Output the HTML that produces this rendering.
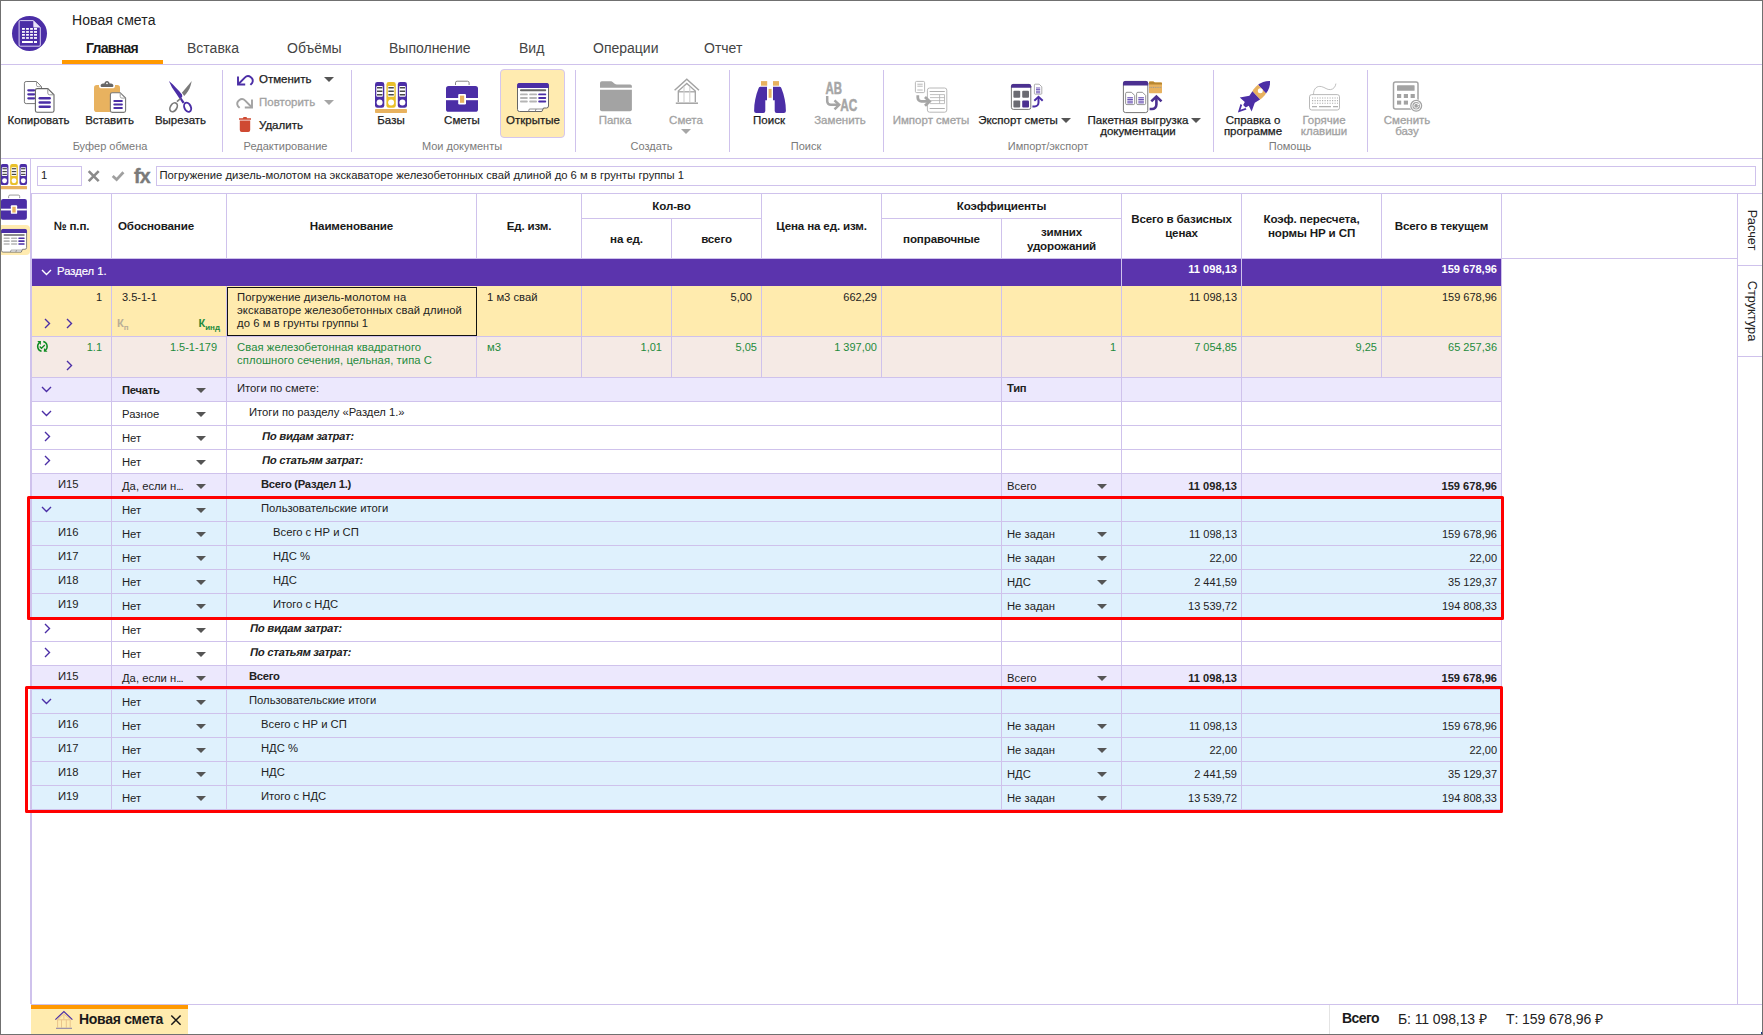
<!DOCTYPE html><html lang="ru"><head><meta charset="utf-8"><title>Новая смета</title><style>
*{box-sizing:border-box}
html,body{margin:0;padding:0}
body{width:1763px;height:1035px;position:relative;overflow:hidden;background:#fff;font-family:"Liberation Sans",sans-serif;font-size:11.25px;color:#222;line-height:13px}
.a{position:absolute}
.t{position:absolute;white-space:nowrap}
.hl{position:absolute;height:1px;background:#cfc2ec}
.vl{position:absolute;width:1px;background:#cfc2ec}
.tab{position:absolute;top:40px;font-size:14px;line-height:16px;color:#444;white-space:nowrap}
.rl{position:absolute;white-space:nowrap;font-size:11.5px;line-height:11px;color:#1c1c1c;text-align:center;-webkit-text-stroke:0.25px #1c1c1c}
.rl.d{color:#a2a2a2;-webkit-text-stroke:0.3px #a2a2a2}
.gl{position:absolute;white-space:nowrap;font-size:11px;line-height:12px;color:#7a7a7a;top:140px;text-align:center}
.ic{position:absolute}
.h{position:absolute;font-weight:bold;font-size:11.600px;letter-spacing:-0.150px;line-height:14px;margin-top:-0.500px;text-align:center;color:#1a1a1a;white-space:nowrap}
.row{position:absolute;left:32px}
.c{position:absolute;white-space:nowrap;line-height:13px}
.r{text-align:right;font-size:11px}
.b{font-weight:bold;letter-spacing:-0.25px}
.r.b{letter-spacing:0;font-size:11.1px}
.g{color:#1e8a3c}
.dd{position:absolute;width:0;height:0;border-left:5.5px solid transparent;border-right:5.5px solid transparent;border-top:5.5px solid #555}
</style></head><body>
<div class="a" style="left:12px;top:16px;width:35px;height:35px;border-radius:50%;background:#4b2ea6"></div>
<svg class="a" style="left:12px;top:16px" width="35" height="35" viewBox="0 0 35 35"><path d="M8.300 4.600h13l7 7v17.400a1.200 1.200 0 0 1-1.200 1.200h-18.800a1.200 1.200 0 0 1-1.200-1.200v-23.200a1.200 1.200 0 0 1 1.200-1.200z" fill="#4b2ea6" stroke="#d9d0f2" stroke-width="1"/><path d="M21.300 4.600l7 7h-5.800a1.200 1.200 0 0 1-1.200-1.200z" fill="#e9e4f8"/>
<g fill="#fff"><rect x="10" y="12" width="2.900" height="1.800"/><rect x="14.100" y="12" width="2.800" height="1.800"/><rect x="18.100" y="12" width="2.800" height="1.800"/><rect x="22" y="12" width="3" height="1.800"/>
<rect x="10" y="15.100" width="2.900" height="1.700"/><rect x="14.100" y="15.100" width="2.800" height="1.700"/><rect x="18.100" y="15.100" width="2.800" height="1.700"/><rect x="22" y="15.100" width="3" height="1.700"/>
<rect x="10" y="18" width="2.900" height="1.700"/><rect x="14.100" y="18" width="2.800" height="1.700"/><rect x="18.100" y="18" width="2.800" height="1.700"/><rect x="22" y="18" width="3" height="1.700"/>
<rect x="10" y="21.100" width="2.900" height="1.700"/><rect x="14.100" y="21.100" width="2.800" height="1.700"/><rect x="18.100" y="21.100" width="2.800" height="1.700"/><rect x="22" y="21.100" width="3" height="1.700"/>
<rect x="10" y="25" width="10.900" height="2"/><rect x="22" y="25" width="3" height="2"/></g></svg>
<div class="t" style="left:72px;top:11px;font-size:14px;line-height:18px;color:#222;letter-spacing:0.1px">Новая смета</div>
<div class="tab" style="left:86px;font-weight:bold;color:#1a1a1a;letter-spacing:-0.7px">Главная</div>
<div class="tab" style="left:187px">Вставка</div>
<div class="tab" style="left:287px">Объёмы</div>
<div class="tab" style="left:389px">Выполнение</div>
<div class="tab" style="left:519px">Вид</div>
<div class="tab" style="left:593px">Операции</div>
<div class="tab" style="left:704px">Отчет</div>
<div class="a" style="left:62px;top:60px;width:101px;height:4px;background:#ff9900"></div>
<div class="hl" style="left:1px;top:64px;width:1761px"></div>
<div class="vl" style="left:222px;top:70px;height:82px"></div>
<div class="vl" style="left:351px;top:70px;height:82px"></div>
<div class="vl" style="left:575px;top:70px;height:82px"></div>
<div class="vl" style="left:729px;top:70px;height:82px"></div>
<div class="vl" style="left:883px;top:70px;height:82px"></div>
<div class="vl" style="left:1213px;top:70px;height:82px"></div>
<div class="vl" style="left:1367px;top:70px;height:82px"></div>
<div class="hl" style="left:1px;top:158px;width:1761px"></div>
<div class="a" style="left:500px;top:69px;width:65px;height:69px;background:#ffebb0;border:1px solid #d4c6ee;border-radius:4px"></div>
<div class="rl " style="left:-21.5px;width:120px;top:115px">Копировать</div>
<div class="rl " style="left:49.5px;width:120px;top:115px">Вставить</div>
<div class="rl " style="left:120.5px;width:120px;top:115px">Вырезать</div>
<div class="gl" style="left:30.0px;width:160px">Буфер обмена</div>
<div class="rl" style="left:259px;top:74px">Отменить</div>
<div class="rl d" style="left:259px;top:97px">Повторить</div>
<div class="rl" style="left:259px;top:120px">Удалить</div>
<div class="dd" style="left:323.5px;top:76.5px"></div>
<div class="dd" style="left:323.5px;top:99.5px;border-top-color:#a6a6a6"></div>
<div class="gl" style="left:205.5px;width:160px">Редактирование</div>
<div class="rl " style="left:331.0px;width:120px;top:115px">Базы</div>
<div class="rl " style="left:402.0px;width:120px;top:115px">Сметы</div>
<div class="rl " style="left:473.0px;width:120px;top:115px">Открытые</div>
<div class="gl" style="left:382.0px;width:160px">Мои документы</div>
<div class="rl d" style="left:555.0px;width:120px;top:115px">Папка</div>
<div class="rl d" style="left:626.0px;width:120px;top:115px">Смета</div>
<div class="dd" style="left:680.5px;top:129px;border-top-color:#a6a6a6"></div>
<div class="gl" style="left:571.5px;width:160px">Создать</div>
<div class="rl " style="left:709.0px;width:120px;top:115px">Поиск</div>
<div class="rl d" style="left:780.0px;width:120px;top:115px">Заменить</div>
<div class="gl" style="left:726.0px;width:160px">Поиск</div>
<div class="rl d" style="left:871.0px;width:120px;top:115px">Импорт сметы</div>
<div class="rl " style="left:958.0px;width:120px;top:115px">Экспорт сметы</div>
<div class="dd" style="left:1060.5px;top:118px"></div>
<div class="rl " style="left:1068.0px;width:140px;top:115px">Пакетная выгрузка<br>документации</div>
<div class="dd" style="left:1190.5px;top:118px"></div>
<div class="gl" style="left:968.0px;width:160px">Импорт/экспорт</div>
<div class="rl " style="left:1193.0px;width:120px;top:115px">Справка о<br>программе</div>
<div class="rl d" style="left:1264.0px;width:120px;top:115px">Горячие<br>клавиши</div>
<div class="gl" style="left:1210.0px;width:160px">Помощь</div>
<div class="rl d" style="left:1347.0px;width:120px;top:115px">Сменить<br>базу</div>
<svg class="a" style="left:0;top:0" width="1763" height="160" viewBox="0 0 1763 160">
<!-- copy -->
<g>
<path d="M26.2 81.5h10.3l5 5.2v15.1a1.8 1.8 0 0 1-1.8 1.8h-13.5a1.8 1.8 0 0 1-1.8-1.8v-18.5a1.8 1.8 0 0 1 1.8-1.8z" fill="#fff" stroke="#777" stroke-width="1"/>
<path d="M36.5 81.5v3.6a1.6 1.6 0 0 0 1.6 1.6h3.4" fill="none" stroke="#9a9a9a" stroke-width="0.9"/>
<g fill="#4b2ea6"><rect x="27.2" y="89.2" width="8" height="2.2" rx="1.1"/><rect x="27.2" y="93.2" width="8" height="2.2" rx="1.1"/><rect x="27.2" y="97.2" width="8" height="2.2" rx="1.1"/></g>
<path d="M37.2 88.6h10.6l6.2 6.2v15.7a1.8 1.8 0 0 1-1.8 1.8h-15a1.8 1.8 0 0 1-1.8-1.8v-20.1a1.8 1.8 0 0 1 1.8-1.8z" fill="#fff" stroke="#666" stroke-width="1.1"/>
<path d="M47.8 88.6v4.4a1.8 1.8 0 0 0 1.8 1.8h4.4" fill="none" stroke="#8a8a8a" stroke-width="0.9"/>
<g fill="#4b2ea6" transform="translate(38.5 97)"><rect x="0" y="0" width="12.4" height="2.4" rx="1.2"/><rect x="0" y="4.3" width="12.4" height="2.4" rx="1.2"/><rect x="0" y="8.6" width="12.4" height="2.4" rx="1.2"/></g>
</g>
<!-- paste -->
<g>
<rect x="94" y="85" width="26" height="27" rx="2.8" fill="#e8b25f"/>
<path d="M99 84.5h16v1.2a2.6 2.6 0 0 1-2.6 2.6h-10.8a2.6 2.6 0 0 1-2.6-2.6z" fill="#fff"/>
<path d="M101.8 87a1.2 1.2 0 0 1-1.2-1.2c0-1.3 1-2 2.4-2.2h1.4c0.2-1.6 1.2-2.7 2.6-2.7s2.4 1.1 2.6 2.7h1.4c1.4 0.200 2.400 0.900 2.400 2.200a1.200 1.200 0 0 1-1.200 1.200z" fill="#666"/>
<circle cx="107" cy="83.300" r="0.900" fill="#fff"/>
<path d="M112.200 92.700h8l5.400 5.400v12.500a1.800 1.800 0 0 1-1.800 1.800h-11.600a1.800 1.800 0 0 1-1.800-1.800v-16.100a1.800 1.800 0 0 1 1.800-1.800z" fill="#fff" stroke="#777" stroke-width="1.100"/>
<path d="M120.200 92.700v3.700a1.700 1.700 0 0 0 1.700 1.700h3.700" fill="none" stroke="#9a9a9a" stroke-width="0.900"/>
<g fill="#4b2ea6"><rect x="113.300" y="100" width="9.600" height="2.100" rx="1"/><rect x="113.300" y="103.500" width="9.600" height="2.100" rx="1"/><rect x="113.300" y="107" width="9.600" height="2.100" rx="1"/></g>
</g>
<!-- scissors -->
<g>
<path d="M191.800 81l-1.200 4.500c-1.200 4-3.200 7.300-6.400 10.400l-2.300-3.200z" fill="#7a7a7a"/>
<path d="M168.900 81L172.700 84.200L175.700 87.600L179.100 91L182 94.600L182.300 96.500L181.400 97.800L184.600 102.200L182.600 103.600L176.800 94.400L172 87.600Z" fill="#4b2ea6"/>
<ellipse cx="187.600" cy="107.300" rx="3.200" ry="4.800" transform="rotate(-24 187.600 107.300)" fill="#fff" stroke="#4b2ea6" stroke-width="1.900"/>
<path d="M180.500 98.500l-3.500 3.200" stroke="#7a7a7a" stroke-width="1.600" fill="none"/>
<ellipse cx="173.600" cy="107.300" rx="3.200" ry="4.800" transform="rotate(32 173.600 107.300)" fill="#fff" stroke="#7a7a7a" stroke-width="1.700"/>
</g>
<!-- undo -->
<g fill="none" stroke="#4b2ea6" stroke-width="1.900">
<path d="M238 76.500v8h7.200"/>
<path d="M238.500 84l6.300-6.400a4.600 4.600 0 0 1 7.200 5.600l-1.600 1.600"/>
</g>
<!-- redo -->
<g fill="none" stroke="#a3a3a3" stroke-width="1.900">
<path d="M252 99.500v8h-7.200"/>
<path d="M251.500 107l-6.300-6.400a4.600 4.600 0 0 0-7.200 5.600l1.600 1.600"/>
</g>
<!-- trash -->
<g fill="#cf4a32">
<path d="M239 118.200h3.800l0.800-1.100h2.800l0.800 1.100h3.800v1.500h-12z"/>
<path d="M239.800 120.600h10.400v9.400a1.900 1.900 0 0 1-1.900 1.900h-6.600a1.900 1.900 0 0 1-1.900-1.900z"/>
</g>
<!-- bases -->
<g>
<rect x="375" y="82" width="9.300" height="25.800" rx="2.400" fill="#4b2ea6"/>
<rect x="386.400" y="82" width="9.400" height="25.800" rx="2.400" fill="#e9c02a"/>
<rect x="397.800" y="82" width="9.200" height="25.800" rx="2.400" fill="#4b2ea6"/>
<g fill="#fff"><rect x="376.300" y="86" width="6.600" height="10.800" rx="1"/><rect x="387.800" y="86" width="6.600" height="10.800" rx="1"/><rect x="399.100" y="86" width="6.600" height="10.800" rx="1"/>
<circle cx="379.600" cy="102.500" r="3"/><circle cx="391.100" cy="102.500" r="3"/><circle cx="402.400" cy="102.500" r="3"/></g>
<g fill="#4a4a4a"><rect x="377" y="87" width="5.400" height="1.500"/><rect x="377" y="90.500" width="5.400" height="1.500"/><rect x="377" y="94" width="5.400" height="1.500"/>
<rect x="388.400" y="87" width="5.400" height="1.500"/><rect x="388.400" y="90.500" width="5.400" height="1.500"/><rect x="388.400" y="94" width="5.400" height="1.500"/>
<rect x="399.700" y="87" width="5.400" height="1.500"/><rect x="399.700" y="90.500" width="5.400" height="1.500"/><rect x="399.700" y="94" width="5.400" height="1.500"/></g>
<rect x="375" y="109" width="32" height="4" rx="0.800" fill="#e8b25f"/>
</g>
<!-- briefcase -->
<g>
<path d="M455.500 85v-2.200a1.600 1.600 0 0 1 1.600-1.600h10.400a1.600 1.600 0 0 1 1.600 1.600v2.200" fill="none" stroke="#777" stroke-width="0.900"/>
<rect x="446" y="86" width="32" height="25.800" rx="2.600" fill="#4b2ea6"/>
<rect x="446" y="98" width="32" height="2.200" fill="#fff"/>
<rect x="458.200" y="93.900" width="7.800" height="10.500" rx="1.200" fill="#fff"/>
<rect x="460" y="95.600" width="4.200" height="7.200" fill="#e8b25f"/>
</g>
<!-- open -->
<g>
<path d="M517.500 85.500a2 2 0 0 1 2-2h27a2 2 0 0 1 2 2v20.500a2 2 0 0 1-2 2h-3l-1.600 3.500h-22.400a2 2 0 0 1-2-2z" fill="#fff" stroke="#666" stroke-width="1"/>
<path d="M517.100 88v-2.700a2.200 2.200 0 0 1 2.200-2.200h27.400a2.200 2.200 0 0 1 2.200 2.200v2.700z" fill="#4b2ea6"/>
<path d="M528.500 111.400l0.800-2.400h13.600M535.200 111.400l0.900-2.400" fill="none" stroke="#777" stroke-width="0.800"/>
<rect x="520" y="89.300" width="26.200" height="1.900" rx="0.900" fill="#666"/>
<g fill="#b5b5b5"><rect x="520" y="93.400" width="7.800" height="1.900" rx="0.900"/><rect x="529.200" y="93.400" width="7.800" height="1.900" rx="0.900"/>
<rect x="520" y="97" width="7.800" height="1.900" rx="0.900"/><rect x="529.200" y="97" width="7.800" height="1.900" rx="0.900"/>
<rect x="520" y="100.500" width="7.800" height="1.900" rx="0.900"/><rect x="529.200" y="100.500" width="7.800" height="1.900" rx="0.900"/></g>
<g fill="#4b2ea6"><rect x="538.200" y="93.400" width="8" height="1.900" rx="0.900"/><rect x="538.200" y="97" width="8" height="1.900" rx="0.900"/><rect x="538.200" y="100.500" width="8" height="1.900" rx="0.900"/></g>
</g>
<!-- folder -->
<g fill="#a3a3a3">
<path d="M600 87.800v-4.800a1.800 1.800 0 0 1 1.800-1.800h8.400c1.400 0 2.200 0.500 3 1.400c1 1.200 2 1.800 3.600 1.800h13.300a1.800 1.800 0 0 1 1.800 1.800v1.600z"/>
<path d="M600 89.700h31.900v19.600a1.900 1.900 0 0 1-1.900 1.900h-28.100a1.900 1.900 0 0 1-1.900-1.900z"/>
</g>
<!-- house -->
<g fill="none" stroke="#a3a3a3">
<path d="M674.600 90.200l12.200-11l12.200 11" stroke-width="1.500"/>
<path d="M678.300 102v-11l8.500-7.600l8.500 7.600v11" stroke-width="1.300"/>
<path d="M678.300 91.800h17" stroke-width="1.300"/>
<path d="M684 86.500v15.500M689.800 86.500v15.500" stroke="#d0d0d0" stroke-width="1.100"/>
<path d="M675.800 103.200h22.200" stroke-width="1.500"/>
</g>
<!-- binoculars -->
<g>
<rect x="761" y="81.100" width="6.200" height="4.600" fill="#e8b25f"/>
<rect x="773" y="81.100" width="6" height="4.600" fill="#e8b25f"/>
<rect x="768.600" y="88.900" width="3" height="8.900" fill="#e8b25f"/>
<path d="M760.200 86.800h6.800v13.400h-1.700v10.700a2 2 0 0 1-2 2h-7.200a2 2 0 0 1-2-2c0-8 1.600-15.500 4.400-22.500a2.200 2.200 0 0 1 1.700-1.600z" fill="#4b2ea6"/>
<path d="M779.800 86.800h-6.800v13.400h1.700v10.700a2 2 0 0 0 2 2h7.200a2 2 0 0 0 2-2c0-8-1.600-15.500-4.400-22.500a2.200 2.200 0 0 0-1.700-1.600z" fill="#4b2ea6"/>
</g>
<!-- AB AC -->
<g fill="#a6a6a6" stroke="#a6a6a6" stroke-width="0.5" font-family="Liberation Sans, sans-serif" font-weight="bold" font-size="16">
<text x="825.500" y="93.700" textLength="16.500" lengthAdjust="spacingAndGlyphs">AB</text>
<text x="840.300" y="110.700" textLength="17" lengthAdjust="spacingAndGlyphs">AC</text>
<path d="M827.200 96v5.200a3.600 3.600 0 0 0 3.600 3.600h8" fill="none" stroke="#a6a6a6" stroke-width="2.500"/>
<path d="M834.500 100.300l4.700 4.500l-4.700 4.500" fill="none" stroke="#a6a6a6" stroke-width="2.500"/>
</g>
<!-- import -->
<g fill="none" stroke="#b0b0b0">
<rect x="915.400" y="81.400" width="9.200" height="11.200" rx="1.200" fill="#fff" stroke-width="0.900"/>
<path d="M917.300 84.200h5.400M917.300 86.200h5.400M917.300 90h5.400" stroke-width="0.900"/>
<rect x="927.400" y="88" width="19.400" height="24.200" rx="2.200" fill="#fff" stroke-width="0.900"/>
<path d="M929.600 91.500h15.200M929.600 108.500h15.200" stroke-width="1.200"/>
<path d="M930 94.600h14.500v9h-14.500M930 97.600h14.500M930 100.600h14.500M939.600 94.600v9" stroke-width="0.800"/>
<path d="M917.800 95.300v2.500a3.600 3.600 0 0 0 3.600 3.600h8" stroke="#a6a6a6" stroke-width="2.800"/>
<path d="M925 97l4.600 4.400l-4.600 4.400" stroke="#a6a6a6" stroke-width="2.800"/>
</g>
<!-- export -->
<g>
<rect x="1011.400" y="84.400" width="19.400" height="25" rx="2" fill="#fff" stroke="#666" stroke-width="0.900"/>
<path d="M1011 87.800v-1.600a2.200 2.200 0 0 1 2.200-2.200h15.800a2.200 2.200 0 0 1 2.200 2.200v1.600z" fill="#4b3090"/>
<rect x="1013.400" y="90.800" width="6.800" height="7" rx="1" fill="#6b6b72"/><rect x="1022.200" y="90.800" width="6.800" height="7" rx="1" fill="#6b6b72"/>
<rect x="1013.400" y="100.600" width="6.800" height="7" rx="1" fill="#6b6b72"/><rect x="1022.200" y="100.600" width="6.800" height="7" rx="1" fill="#4b3090"/>
<path d="M1034.400 85a0.800 0.800 0 0 1 0.800-0.800h4l2.600 2.600v6.600a0.800 0.800 0 0 1-0.800 0.800h-5.800a0.800 0.800 0 0 1-0.800-0.800z" fill="#fff" stroke="#999" stroke-width="0.800"/>
<path d="M1036 88h4.200M1036 89.600h4.200M1036 91.200h4.200M1036 92.800h4.200" stroke="#4b2ea6" stroke-width="0.800"/>
<path d="M1032.400 106.400h2.200a3.900 3.900 0 0 0 3.900-3.900v-5" fill="none" stroke="#4b2ea6" stroke-width="2"/>
<path d="M1034.300 100.800l4.200-4l4.200 4" fill="none" stroke="#4b2ea6" stroke-width="2"/>
</g>
<!-- batch -->
<g>
<rect x="1123.400" y="81.400" width="24.400" height="31.200" rx="2.200" fill="#fff" stroke="#666" stroke-width="0.900"/>
<path d="M1123 85.600v-2.400a2.200 2.200 0 0 1 2.200-2.200h20.800a2.200 2.200 0 0 1 2.200 2.200v2.400z" fill="#4b3090"/>
<path d="M1125.600 93.600a1.300 1.300 0 0 1 1.300-1.300h4.600l3.200 3.200v7.800a1.300 1.300 0 0 1-1.300 1.300h-6.500a1.300 1.300 0 0 1-1.300-1.300z" fill="#fff" stroke="#777" stroke-width="0.800"/>
<path d="M1136.600 93.600a1.300 1.300 0 0 1 1.300-1.300h4.600l3.200 3.200v7.800a1.300 1.300 0 0 1-1.300 1.300h-6.500a1.300 1.300 0 0 1-1.300-1.300z" fill="#fff" stroke="#777" stroke-width="0.800"/>
<g fill="#6a52b5"><rect x="1127.300" y="97.200" width="5.600" height="1.100"/><rect x="1127.300" y="98.900" width="5.600" height="1.100"/><rect x="1127.300" y="100.600" width="5.600" height="1.100"/><rect x="1127.300" y="102.300" width="5.600" height="1.100"/>
<rect x="1138.300" y="97.200" width="5.600" height="1.100"/><rect x="1138.300" y="98.900" width="5.600" height="1.100"/><rect x="1138.300" y="100.600" width="5.600" height="1.100"/><rect x="1138.300" y="102.300" width="5.600" height="1.100"/></g>
<path d="M1149 82.200a0.800 0.800 0 0 1 0.800-0.800h3.600l1.400 1.200h6.400a0.800 0.800 0 0 1 0.800 0.800v9a0.800 0.800 0 0 1-0.800 0.800h-11.400a0.800 0.800 0 0 1-0.800-0.800z" fill="#e8b25f"/>
<path d="M1149 82.200a0.800 0.800 0 0 1 0.800-0.800h3.600l1.400 1.200h6.400a0.800 0.800 0 0 1 0.800 0.800v1h-13z" fill="#b8862f"/>
<path d="M1149.400 87.400h12.400" stroke="#999" stroke-width="1" stroke-dasharray="1 0.800"/>
<path d="M1149.600 109h2.400a4.400 4.400 0 0 0 4.400-4.400v-7.500" fill="none" stroke="#4b3090" stroke-width="2.600"/>
<path d="M1151.300 101.400l5.100-4.900l5.100 4.900" fill="none" stroke="#4b3090" stroke-width="2.600"/>
</g>
<!-- rocket -->
<g>
<path d="M1270 81c-4.500-0.200-8.600 1.200-12 3.800l8 8.600c2.900-3.400 4.300-7.600 4-12.400z" fill="#4b2ea6"/>
<path d="M1258 84.800c-2.400 1.800-4 3.800-5.600 6.400l7.700 8.300c2.400-1.700 4.300-3.600 5.900-6.100z" fill="#e8b25f"/>
<circle cx="1260.300" cy="90.700" r="2.500" fill="#fff"/>
<path d="M1252.400 91.200l-3 4.600l-9.600 1.800l5 4.400l-1.600 3l2.400 2.400l3.200-1.600l2.800 5.800l3.200-8.800l5.300-3.300z" fill="#4b2ea6"/>
<path d="M1240.500 104l-2.600 8.600l8.600-3.200l-1-1.400l-5 1.800l1.600-4.800z" fill="#4b2ea6"/>
</g>
<!-- keyboard -->
<g fill="none" stroke="#b0b0b0">
<rect x="1309.500" y="94.600" width="30" height="15.400" rx="2.200" stroke-width="0.900"/>
<path d="M1313.500 94.400c0-6 3.500-8.800 8-7.800c3.600 0.800 5.600 3.400 9 3c3-0.400 5-2.800 5.400-6" stroke-width="0.800"/>
<path d="M1312 98h26M1312 100.600h26M1312 103.200h26" stroke-width="1.100" stroke-dasharray="1.200 1.300"/>
<path d="M1312 106.600h5M1319 106.600h12M1333 106.600h5" stroke-width="1.100"/>
</g>
<!-- calculator -->
<g>
<rect x="1393.500" y="82" width="24.500" height="27" rx="2" fill="#fff" stroke="#a3a3a3" stroke-width="1.500"/>
<rect x="1397" y="85.200" width="17.600" height="5.600" rx="0.600" fill="#a3a3a3"/>
<g fill="#a3a3a3"><rect x="1397" y="94" width="4.200" height="4"/><rect x="1403.800" y="94" width="4.200" height="4"/><rect x="1410.600" y="94" width="4.200" height="4"/>
<rect x="1397" y="100.600" width="4.200" height="4"/><rect x="1403.800" y="100.600" width="4.200" height="4"/></g>
<circle cx="1416.200" cy="105.800" r="6.600" fill="#fff"/>
<circle cx="1416.200" cy="105.800" r="5.400" fill="#fff" stroke="#a3a3a3" stroke-width="1.300"/>
<circle cx="1416.200" cy="105.800" r="3.800" fill="#a3a3a3"/>
<path d="M1418 104.300a2.300 2.300 0 1 0 0.500 1.900" fill="none" stroke="#fff" stroke-width="1"/>
<path d="M1419.300 102.800v2.400h-2.400z" fill="#fff"/>
</g>
</svg>

<div class="a" style="left:37px;top:166px;width:45px;height:20px;border:1px solid #cfc2ec"></div>
<div class="t" style="left:41px;top:169px">1</div>
<div class="a" style="left:156px;top:166px;width:1600px;height:20px;border:1px solid #cfc2ec"></div>
<div class="t" style="left:159.500px;top:169px">Погружение дизель-молотом на экскаваторе железобетонных свай длиной до 6 м в грунты группы 1</div>
<svg class="a" style="left:86px;top:168px" width="70" height="18" viewBox="0 0 70 18"><path d="M2.700 3.200l10 10M12.700 3.200l-10 10" stroke="#8a8a8a" stroke-width="2.600" fill="none"/><path d="M26.700 8l3.900 3.600l6.800-7.300" stroke="#a0a0a0" stroke-width="2.800" fill="none"/></svg>
<div class="t" style="left:134px;top:164.500px;font-size:19.600px;line-height:22px;font-weight:bold;color:#7a7a7a;-webkit-text-stroke:0.4px #7a7a7a;letter-spacing:-0.700px">fx</div>
<div class="hl" style="left:31px;top:193px;width:1731px"></div>
<div class="vl" style="left:30px;top:158px;height:846px"></div>
<div class="vl" style="left:31px;top:194px;height:810px"></div>
<div class="a" style="left:1px;top:225px;width:28.5px;height:30px;background:#ffebb0;border-radius:0 4px 4px 0"></div>
<svg class="a" style="left:1px;top:160px" width="29" height="100" viewBox="1 160 29 100">
<g transform="translate(-306.7 97.2) scale(0.82 0.815)">
<rect x="375" y="82" width="9.300" height="25.800" rx="2.400" fill="#4b2ea6"/>
<rect x="386.400" y="82" width="9.400" height="25.800" rx="2.400" fill="#e9c02a"/>
<rect x="397.800" y="82" width="9.200" height="25.800" rx="2.400" fill="#4b2ea6"/>
<g fill="#fff"><rect x="376.300" y="86" width="6.600" height="10.800" rx="1"/><rect x="387.800" y="86" width="6.600" height="10.800" rx="1"/><rect x="399.100" y="86" width="6.600" height="10.800" rx="1"/>
<circle cx="379.600" cy="102.500" r="3"/><circle cx="391.100" cy="102.500" r="3"/><circle cx="402.400" cy="102.500" r="3"/></g>
<g fill="#4a4a4a"><rect x="377" y="87" width="5.400" height="1.500"/><rect x="377" y="90.500" width="5.400" height="1.500"/><rect x="377" y="94" width="5.400" height="1.500"/>
<rect x="388.400" y="87" width="5.400" height="1.500"/><rect x="388.400" y="90.500" width="5.400" height="1.500"/><rect x="388.400" y="94" width="5.400" height="1.500"/>
<rect x="399.700" y="87" width="5.400" height="1.500"/><rect x="399.700" y="90.500" width="5.400" height="1.500"/><rect x="399.700" y="94" width="5.400" height="1.500"/></g>
<rect x="375" y="109" width="32" height="4" rx="0.800" fill="#e8b25f"/>
</g>
<g transform="translate(-360.3 129.3) scale(0.81)">
<path d="M455.500 85v-2.200a1.600 1.600 0 0 1 1.600-1.600h10.400a1.600 1.600 0 0 1 1.600 1.600v2.200" fill="none" stroke="#777" stroke-width="0.900"/>
<rect x="446" y="86" width="32" height="25.800" rx="2.600" fill="#4b2ea6"/>
<rect x="446" y="98" width="32" height="2.200" fill="#fff"/>
<rect x="458.200" y="93.900" width="7.800" height="10.500" rx="1.200" fill="#fff"/>
<rect x="460" y="95.600" width="4.200" height="7.200" fill="#e8b25f"/>
</g>
<g transform="translate(-417.7 161.8) scale(0.81)">
<path d="M517.500 85.500a2 2 0 0 1 2-2h27a2 2 0 0 1 2 2v20.500a2 2 0 0 1-2 2h-3l-1.600 3.500h-22.400a2 2 0 0 1-2-2z" fill="#fff" stroke="#666" stroke-width="1"/>
<path d="M517.100 88v-2.700a2.200 2.200 0 0 1 2.200-2.200h27.400a2.200 2.200 0 0 1 2.200 2.200v2.700z" fill="#4b2ea6"/>
<path d="M528.500 111.400l0.800-2.400h13.600M535.200 111.400l0.900-2.400" fill="none" stroke="#777" stroke-width="0.800"/>
<rect x="520" y="89.300" width="26.200" height="1.900" rx="0.900" fill="#666"/>
<g fill="#b5b5b5"><rect x="520" y="93.400" width="7.800" height="1.900" rx="0.900"/><rect x="529.200" y="93.400" width="7.800" height="1.900" rx="0.900"/>
<rect x="520" y="97" width="7.800" height="1.900" rx="0.900"/><rect x="529.200" y="97" width="7.800" height="1.900" rx="0.900"/>
<rect x="520" y="100.500" width="7.800" height="1.900" rx="0.900"/><rect x="529.200" y="100.500" width="7.800" height="1.900" rx="0.900"/></g>
<g fill="#4b2ea6"><rect x="538.200" y="93.400" width="8" height="1.900" rx="0.900"/><rect x="538.200" y="97" width="8" height="1.900" rx="0.900"/><rect x="538.200" y="100.500" width="8" height="1.900" rx="0.900"/></g>
</g>
</svg>

<div class="hl" style="left:31px;top:258px;width:1707px"></div>
<div class="vl" style="left:31px;top:194px;height:64px"></div>
<div class="vl" style="left:111px;top:194px;height:64px"></div>
<div class="vl" style="left:226px;top:194px;height:64px"></div>
<div class="vl" style="left:476px;top:194px;height:64px"></div>
<div class="vl" style="left:581px;top:194px;height:64px"></div>
<div class="vl" style="left:671px;top:218px;height:40px"></div>
<div class="vl" style="left:761px;top:194px;height:64px"></div>
<div class="vl" style="left:881px;top:194px;height:64px"></div>
<div class="vl" style="left:1001px;top:218px;height:40px"></div>
<div class="vl" style="left:1121px;top:194px;height:64px"></div>
<div class="vl" style="left:1241px;top:194px;height:64px"></div>
<div class="vl" style="left:1381px;top:194px;height:64px"></div>
<div class="vl" style="left:1501px;top:194px;height:64px"></div>
<div class="hl" style="left:581px;top:218px;width:180px"></div>
<div class="hl" style="left:881px;top:218px;width:240px"></div>
<div class="h" style="left:32px;width:79px;top:219px">№ п.п.</div>
<div class="h" style="left:118px;top:219px;text-align:left">Обоснование</div>
<div class="h" style="left:227px;width:249px;top:219px">Наименование</div>
<div class="h" style="left:477px;width:104px;top:219px">Ед. изм.</div>
<div class="h" style="left:582px;width:179px;top:199px">Кол-во</div>
<div class="h" style="left:582px;width:89px;top:232px">на ед.</div>
<div class="h" style="left:672px;width:89px;top:232px">всего</div>
<div class="h" style="left:762px;width:119px;top:219px">Цена на ед. изм.</div>
<div class="h" style="left:882px;width:239px;top:199px">Коэффициенты</div>
<div class="h" style="left:882px;width:119px;top:232px">поправочные</div>
<div class="h" style="left:1002px;width:119px;top:225px">зимних<br>удорожаний</div>
<div class="h" style="left:1122px;width:119px;top:212px">Всего в базисных<br>ценах</div>
<div class="h" style="left:1242px;width:139px;top:212px">Коэф. пересчета,<br>нормы НР и СП</div>
<div class="h" style="left:1382px;width:119px;top:219px">Всего в текущем</div>
<div class="a" style="left:32px;top:259px;width:1469px;height:27px;background:#5b34ad"></div>
<div class="vl" style="left:1121px;top:259px;height:27px;background:#cfc2ec"></div>
<div class="vl" style="left:1241px;top:259px;height:27px;background:#cfc2ec"></div>
<svg class="a" style="left:41px;top:269px" width="11" height="7" viewBox="0 0 11 7"><path d="M1 1l4.5 4.5l4.5-4.5" fill="none" stroke="#fff" stroke-width="1.4"/></svg>
<div class="c " style="left:57px;top:265px;color:#fff;-webkit-text-stroke:0.2px #fff">Раздел 1.</div>
<div class="c r b" style="left:1037px;width:200px;top:263px;color:#fff">11 098,13</div>
<div class="c r b" style="left:1297px;width:200px;top:263px;color:#fff">159 678,96</div>
<div class="a" style="left:32px;top:286px;width:1469px;height:50px;background:#ffebae"></div>
<div class="hl" style="left:32px;top:336px;width:1469px"></div>
<div class="a" style="left:32px;top:337px;width:1469px;height:40px;background:#f5eae5"></div>
<div class="hl" style="left:32px;top:377px;width:1469px"></div>
<div class="vl" style="left:111px;top:286px;height:91px"></div>
<div class="vl" style="left:226px;top:286px;height:91px"></div>
<div class="vl" style="left:476px;top:286px;height:91px"></div>
<div class="vl" style="left:581px;top:286px;height:91px"></div>
<div class="vl" style="left:671px;top:286px;height:91px"></div>
<div class="vl" style="left:761px;top:286px;height:91px"></div>
<div class="vl" style="left:881px;top:286px;height:91px"></div>
<div class="vl" style="left:1001px;top:286px;height:91px"></div>
<div class="vl" style="left:1121px;top:286px;height:91px"></div>
<div class="vl" style="left:1241px;top:286px;height:91px"></div>
<div class="vl" style="left:1381px;top:286px;height:91px"></div>
<div class="vl" style="left:1501px;top:286px;height:91px"></div>
<div class="a" style="left:227px;top:287px;width:250px;height:49px;border:1.500px solid #111;background:#ffebae"></div>
<div class="c r " style="left:-98px;width:200px;top:291px;">1</div>
<div class="c " style="left:122px;top:291px;font-size:11px">3.5-1-1</div>
<svg class="a" style="left:44px;top:318px" width="7" height="11" viewBox="0 0 7 11"><path d="M1 1l4.5 4.5l-4.5 4.5" fill="none" stroke="#4b2ea6" stroke-width="1.4"/></svg>
<svg class="a" style="left:66px;top:318px" width="7" height="11" viewBox="0 0 7 11"><path d="M1 1l4.5 4.5l-4.5 4.5" fill="none" stroke="#4b2ea6" stroke-width="1.4"/></svg>
<div class="c b" style="left:117px;top:317px;color:#b9ad96">К<span style="font-size:8px;position:relative;top:3px">п</span></div>
<div class="c b r" style="left:120px;width:100px;top:317px;color:#1e8a3c">К<span style="font-size:8px;position:relative;top:3px">инд</span></div>
<div class="c" style="left:237px;top:291px;white-space:normal;width:236px;letter-spacing:0.08px">Погружение дизель-молотом на<br>экскаваторе железобетонных свай длиной<br>до 6 м в грунты группы 1</div>
<div class="c " style="left:487px;top:291px;">1 м3 свай</div>
<div class="c r " style="left:552px;width:200px;top:291px;">5,00</div>
<div class="c r " style="left:677px;width:200px;top:291px;">662,29</div>
<div class="c r " style="left:1037px;width:200px;top:291px;">11 098,13</div>
<div class="c r " style="left:1297px;width:200px;top:291px;">159 678,96</div>
<div class="c r g" style="left:-98px;width:200px;top:341px;">1.1</div>
<div class="c r g" style="left:17px;width:200px;top:341px;">1.5-1-179</div>
<svg class="a" style="left:66px;top:360px" width="7" height="11" viewBox="0 0 7 11"><path d="M1 1l4.5 4.5l-4.5 4.5" fill="none" stroke="#4b2ea6" stroke-width="1.4"/></svg>
<svg class="a" style="left:36px;top:340px" width="13" height="13" viewBox="0 0 13 13"><g fill="none" stroke="#0f8c22" stroke-width="1.5"><path d="M5.550 11.230A4.900 4.900 0 0 1 3.300 2.800"/><path d="M7.250 1.570A4.900 4.900 0 0 1 9.500 10"/><path d="M3.700 6.500l1.800 1.800l3.300-3.300" stroke-width="1.300"/></g><path d="M1.300 1l3.700 0l-0.200 3.900z" fill="#0f8c22"/><path d="M11.500 11.800l-3.700 0l0.200-3.900z" fill="#0f8c22"/></svg>
<div class="c g" style="left:237px;top:341px;letter-spacing:0.08px">Свая железобетонная квадратного<br>сплошного сечения, цельная, типа С</div>
<div class="c g" style="left:487px;top:341px;">м3</div>
<div class="c r g" style="left:462px;width:200px;top:341px;">1,01</div>
<div class="c r g" style="left:557px;width:200px;top:341px;">5,05</div>
<div class="c r g" style="left:677px;width:200px;top:341px;">1 397,00</div>
<div class="c r g" style="left:916px;width:200px;top:341px;">1</div>
<div class="c r g" style="left:1037px;width:200px;top:341px;">7 054,85</div>
<div class="c r g" style="left:1177px;width:200px;top:341px;">9,25</div>
<div class="c r g" style="left:1297px;width:200px;top:341px;">65 257,36</div>
<div class="a" style="left:32px;top:378px;width:1469px;height:23px;background:#ece8fd"></div>
<div class="hl" style="left:32px;top:401px;width:1469px"></div>
<svg class="a" style="left:41px;top:386px" width="11" height="7" viewBox="0 0 11 7"><path d="M1 1l4.5 4.5l4.5-4.5" fill="none" stroke="#4b2ea6" stroke-width="1.4"/></svg>
<div class="c b" style="left:122px;top:384px;">Печать</div>
<div class="dd" style="left:195.5px;top:388px"></div>
<div class="c " style="left:237px;top:382px;">Итоги по смете:</div>
<div class="c b" style="left:1007px;top:382px;">Тип</div>
<div class="hl" style="left:32px;top:425px;width:1469px"></div>
<svg class="a" style="left:41px;top:410px" width="11" height="7" viewBox="0 0 11 7"><path d="M1 1l4.5 4.5l4.5-4.5" fill="none" stroke="#4b2ea6" stroke-width="1.4"/></svg>
<div class="c " style="left:122px;top:408px;">Разное</div>
<div class="dd" style="left:195.5px;top:412px"></div>
<div class="c " style="left:249px;top:406px;">Итоги по разделу «Раздел 1.»</div>
<div class="hl" style="left:32px;top:449px;width:1469px"></div>
<svg class="a" style="left:44px;top:431px" width="7" height="11" viewBox="0 0 7 11"><path d="M1 1l4.5 4.5l-4.5 4.5" fill="none" stroke="#4b2ea6" stroke-width="1.4"/></svg>
<div class="c " style="left:122px;top:432px;">Нет</div>
<div class="dd" style="left:195.5px;top:436px"></div>
<div class="c " style="left:261px;top:430px;font-weight:bold;letter-spacing:-0.30px;transform:skewX(-11deg);transform-origin:0 100%">По видам затрат:</div>
<div class="hl" style="left:32px;top:473px;width:1469px"></div>
<svg class="a" style="left:44px;top:455px" width="7" height="11" viewBox="0 0 7 11"><path d="M1 1l4.5 4.5l-4.5 4.5" fill="none" stroke="#4b2ea6" stroke-width="1.4"/></svg>
<div class="c " style="left:122px;top:456px;">Нет</div>
<div class="dd" style="left:195.5px;top:460px"></div>
<div class="c " style="left:261px;top:454px;font-weight:bold;letter-spacing:-0.30px;transform:skewX(-11deg);transform-origin:0 100%">По статьям затрат:</div>
<div class="a" style="left:32px;top:474px;width:1469px;height:23px;background:#ece8fd"></div>
<div class="hl" style="left:32px;top:497px;width:1469px"></div>
<div class="c " style="left:58px;top:478px;">И15</div>
<div class="c " style="left:122px;top:480px;">Да, если н<span style="letter-spacing:-1px">...</span></div>
<div class="dd" style="left:195.5px;top:484px"></div>
<div class="c " style="left:261px;top:478px;font-weight:bold;letter-spacing:-0.3px">Всего (Раздел 1.)</div>
<div class="c " style="left:1007px;top:480px;">Всего</div>
<div class="dd" style="left:1096.5px;top:484px"></div>
<div class="c r b" style="left:1037px;width:200px;top:480px;">11 098,13</div>
<div class="c r b" style="left:1297px;width:200px;top:480px;">159 678,96</div>
<div class="a" style="left:32px;top:498px;width:1469px;height:23px;background:#dff1fd"></div>
<div class="hl" style="left:32px;top:521px;width:1469px"></div>
<svg class="a" style="left:41px;top:506px" width="11" height="7" viewBox="0 0 11 7"><path d="M1 1l4.5 4.5l4.5-4.5" fill="none" stroke="#4b2ea6" stroke-width="1.4"/></svg>
<div class="c " style="left:122px;top:504px;">Нет</div>
<div class="dd" style="left:195.5px;top:508px"></div>
<div class="c " style="left:261px;top:502px;">Пользовательские итоги</div>
<div class="a" style="left:32px;top:522px;width:1469px;height:23px;background:#dff1fd"></div>
<div class="hl" style="left:32px;top:545px;width:1469px"></div>
<div class="c " style="left:58px;top:526px;">И16</div>
<div class="c " style="left:122px;top:528px;">Нет</div>
<div class="dd" style="left:195.5px;top:532px"></div>
<div class="c " style="left:273px;top:526px;">Всего с НР и СП</div>
<div class="c " style="left:1007px;top:528px;">Не задан</div>
<div class="dd" style="left:1096.5px;top:532px"></div>
<div class="c r " style="left:1037px;width:200px;top:528px;">11 098,13</div>
<div class="c r " style="left:1297px;width:200px;top:528px;">159 678,96</div>
<div class="a" style="left:32px;top:546px;width:1469px;height:23px;background:#dff1fd"></div>
<div class="hl" style="left:32px;top:569px;width:1469px"></div>
<div class="c " style="left:58px;top:550px;">И17</div>
<div class="c " style="left:122px;top:552px;">Нет</div>
<div class="dd" style="left:195.5px;top:556px"></div>
<div class="c " style="left:273px;top:550px;">НДС %</div>
<div class="c " style="left:1007px;top:552px;">Не задан</div>
<div class="dd" style="left:1096.5px;top:556px"></div>
<div class="c r " style="left:1037px;width:200px;top:552px;">22,00</div>
<div class="c r " style="left:1297px;width:200px;top:552px;">22,00</div>
<div class="a" style="left:32px;top:570px;width:1469px;height:23px;background:#dff1fd"></div>
<div class="hl" style="left:32px;top:593px;width:1469px"></div>
<div class="c " style="left:58px;top:574px;">И18</div>
<div class="c " style="left:122px;top:576px;">Нет</div>
<div class="dd" style="left:195.5px;top:580px"></div>
<div class="c " style="left:273px;top:574px;">НДС</div>
<div class="c " style="left:1007px;top:576px;">НДС</div>
<div class="dd" style="left:1096.5px;top:580px"></div>
<div class="c r " style="left:1037px;width:200px;top:576px;">2 441,59</div>
<div class="c r " style="left:1297px;width:200px;top:576px;">35 129,37</div>
<div class="a" style="left:32px;top:594px;width:1469px;height:23px;background:#dff1fd"></div>
<div class="hl" style="left:32px;top:617px;width:1469px"></div>
<div class="c " style="left:58px;top:598px;">И19</div>
<div class="c " style="left:122px;top:600px;">Нет</div>
<div class="dd" style="left:195.5px;top:604px"></div>
<div class="c " style="left:273px;top:598px;">Итого с НДС</div>
<div class="c " style="left:1007px;top:600px;">Не задан</div>
<div class="dd" style="left:1096.5px;top:604px"></div>
<div class="c r " style="left:1037px;width:200px;top:600px;">13 539,72</div>
<div class="c r " style="left:1297px;width:200px;top:600px;">194 808,33</div>
<div class="hl" style="left:32px;top:641px;width:1469px"></div>
<svg class="a" style="left:44px;top:623px" width="7" height="11" viewBox="0 0 7 11"><path d="M1 1l4.5 4.5l-4.5 4.5" fill="none" stroke="#4b2ea6" stroke-width="1.4"/></svg>
<div class="c " style="left:122px;top:624px;">Нет</div>
<div class="dd" style="left:195.5px;top:628px"></div>
<div class="c " style="left:249px;top:622px;font-weight:bold;letter-spacing:-0.30px;transform:skewX(-11deg);transform-origin:0 100%">По видам затрат:</div>
<div class="hl" style="left:32px;top:665px;width:1469px"></div>
<svg class="a" style="left:44px;top:647px" width="7" height="11" viewBox="0 0 7 11"><path d="M1 1l4.5 4.5l-4.5 4.5" fill="none" stroke="#4b2ea6" stroke-width="1.4"/></svg>
<div class="c " style="left:122px;top:648px;">Нет</div>
<div class="dd" style="left:195.5px;top:652px"></div>
<div class="c " style="left:249px;top:646px;font-weight:bold;letter-spacing:-0.30px;transform:skewX(-11deg);transform-origin:0 100%">По статьям затрат:</div>
<div class="a" style="left:32px;top:666px;width:1469px;height:23px;background:#ece8fd"></div>
<div class="hl" style="left:32px;top:689px;width:1469px"></div>
<div class="c " style="left:58px;top:670px;">И15</div>
<div class="c " style="left:122px;top:672px;">Да, если н<span style="letter-spacing:-1px">...</span></div>
<div class="dd" style="left:195.5px;top:676px"></div>
<div class="c " style="left:249px;top:670px;font-weight:bold;letter-spacing:-0.3px">Всего</div>
<div class="c " style="left:1007px;top:672px;">Всего</div>
<div class="dd" style="left:1096.5px;top:676px"></div>
<div class="c r b" style="left:1037px;width:200px;top:672px;">11 098,13</div>
<div class="c r b" style="left:1297px;width:200px;top:672px;">159 678,96</div>
<div class="a" style="left:32px;top:690px;width:1469px;height:23px;background:#dff1fd"></div>
<div class="hl" style="left:32px;top:713px;width:1469px"></div>
<svg class="a" style="left:41px;top:698px" width="11" height="7" viewBox="0 0 11 7"><path d="M1 1l4.5 4.5l4.5-4.5" fill="none" stroke="#4b2ea6" stroke-width="1.4"/></svg>
<div class="c " style="left:122px;top:696px;">Нет</div>
<div class="dd" style="left:195.5px;top:700px"></div>
<div class="c " style="left:249px;top:694px;">Пользовательские итоги</div>
<div class="a" style="left:32px;top:714px;width:1469px;height:23px;background:#dff1fd"></div>
<div class="hl" style="left:32px;top:737px;width:1469px"></div>
<div class="c " style="left:58px;top:718px;">И16</div>
<div class="c " style="left:122px;top:720px;">Нет</div>
<div class="dd" style="left:195.5px;top:724px"></div>
<div class="c " style="left:261px;top:718px;">Всего с НР и СП</div>
<div class="c " style="left:1007px;top:720px;">Не задан</div>
<div class="dd" style="left:1096.5px;top:724px"></div>
<div class="c r " style="left:1037px;width:200px;top:720px;">11 098,13</div>
<div class="c r " style="left:1297px;width:200px;top:720px;">159 678,96</div>
<div class="a" style="left:32px;top:738px;width:1469px;height:23px;background:#dff1fd"></div>
<div class="hl" style="left:32px;top:761px;width:1469px"></div>
<div class="c " style="left:58px;top:742px;">И17</div>
<div class="c " style="left:122px;top:744px;">Нет</div>
<div class="dd" style="left:195.5px;top:748px"></div>
<div class="c " style="left:261px;top:742px;">НДС %</div>
<div class="c " style="left:1007px;top:744px;">Не задан</div>
<div class="dd" style="left:1096.5px;top:748px"></div>
<div class="c r " style="left:1037px;width:200px;top:744px;">22,00</div>
<div class="c r " style="left:1297px;width:200px;top:744px;">22,00</div>
<div class="a" style="left:32px;top:762px;width:1469px;height:23px;background:#dff1fd"></div>
<div class="hl" style="left:32px;top:785px;width:1469px"></div>
<div class="c " style="left:58px;top:766px;">И18</div>
<div class="c " style="left:122px;top:768px;">Нет</div>
<div class="dd" style="left:195.5px;top:772px"></div>
<div class="c " style="left:261px;top:766px;">НДС</div>
<div class="c " style="left:1007px;top:768px;">НДС</div>
<div class="dd" style="left:1096.5px;top:772px"></div>
<div class="c r " style="left:1037px;width:200px;top:768px;">2 441,59</div>
<div class="c r " style="left:1297px;width:200px;top:768px;">35 129,37</div>
<div class="a" style="left:32px;top:786px;width:1469px;height:23px;background:#dff1fd"></div>
<div class="hl" style="left:32px;top:809px;width:1469px"></div>
<div class="c " style="left:58px;top:790px;">И19</div>
<div class="c " style="left:122px;top:792px;">Нет</div>
<div class="dd" style="left:195.5px;top:796px"></div>
<div class="c " style="left:261px;top:790px;">Итого с НДС</div>
<div class="c " style="left:1007px;top:792px;">Не задан</div>
<div class="dd" style="left:1096.5px;top:796px"></div>
<div class="c r " style="left:1037px;width:200px;top:792px;">13 539,72</div>
<div class="c r " style="left:1297px;width:200px;top:792px;">194 808,33</div>
<div class="vl" style="left:111px;top:378px;height:432px"></div>
<div class="vl" style="left:226px;top:378px;height:432px"></div>
<div class="vl" style="left:1001px;top:378px;height:432px"></div>
<div class="vl" style="left:1121px;top:378px;height:432px"></div>
<div class="vl" style="left:1241px;top:378px;height:432px"></div>
<div class="vl" style="left:1501px;top:378px;height:432px"></div>
<div class="vl" style="left:1501px;top:259px;height:119px"></div>
<div class="a" style="left:27.4px;top:496.4px;width:1476.2px;height:123.3px;border:3.3px solid #ff0000;border-radius:1.5px"></div>
<div class="a" style="left:25.3px;top:686.3px;width:1477.5px;height:126.5px;border:3.3px solid #ff0000;border-radius:1.5px"></div>
<div class="vl" style="left:1737px;top:194px;height:810px"></div>
<div class="hl" style="left:1737px;top:265px;width:25px"></div>
<div class="hl" style="left:1737px;top:356px;width:25px"></div>
<div class="t" style="left:1751.800px;top:229.500px;font-size:12.800px;line-height:14px;transform:translate(-50%,-50%) rotate(90deg);color:#222">Расчет</div>
<div class="t" style="left:1751.800px;top:311px;font-size:12.800px;line-height:14px;transform:translate(-50%,-50%) rotate(90deg);color:#222">Структура</div>
<div class="hl" style="left:31px;top:1004px;width:1731px"></div>
<div class="a" style="left:31px;top:1005px;width:157px;height:29px;background:#ffebae"></div>
<div class="a" style="left:31px;top:1005px;width:157px;height:4px;background:#ff9900"></div>
<div class="t" style="left:79px;top:1011px;font-size:14px;line-height:16px;font-weight:bold;color:#1a1a1a;letter-spacing:-0.3px">Новая смета</div>
<svg class="a" style="left:170px;top:1014px" width="12" height="12" viewBox="0 0 12 12"><path d="M1.300 1.500l9.300 9.300M10.600 1.500l-9.300 9.300" stroke="#1a1a1a" stroke-width="1.500"/></svg>
<svg class="a" style="left:54px;top:1009px" width="20" height="22" viewBox="54 1009 20 22">
<g fill="none" stroke="#e9c48c" stroke-width="1">
<path d="M57.600 1027.500v-8l6.300-5.600l6.300 5.600v8"/><path d="M57.600 1019.800h12.600M61.500 1019.800v7.800M66.300 1019.800v7.800M63.900 1015v4.500"/>
</g>
<path d="M55.400 1019.600l8.500-8l8.500 8" fill="none" stroke="#4b2ea6" stroke-width="1.200"/>
<path d="M56 1028.300h16" stroke="#8d84a8" stroke-width="1.100"/>
</svg>

<div class="vl" style="left:1329px;top:1005px;height:29px;background:#e4e4e4"></div>
<div class="t" style="left:1342px;top:1010px;font-size:14px;line-height:16px;font-weight:bold;color:#1a1a1a;letter-spacing:-0.6px">Всего</div>
<div class="t" style="left:1398px;top:1011px;font-size:14px;line-height:16px;color:#222;letter-spacing:-0.1px">Б: 11 098,13 ₽</div>
<div class="t" style="left:1506px;top:1011px;font-size:14px;line-height:16px;color:#222;letter-spacing:-0.1px">Т: 159 678,96 ₽</div>
<div class="a" style="left:0;top:0;width:1763px;height:1035px;border:1px solid #707070;pointer-events:none"></div>
<div class="a" style="left:1761px;top:1032px;width:1px;height:2px;background:#1f3488"></div>
</body></html>
